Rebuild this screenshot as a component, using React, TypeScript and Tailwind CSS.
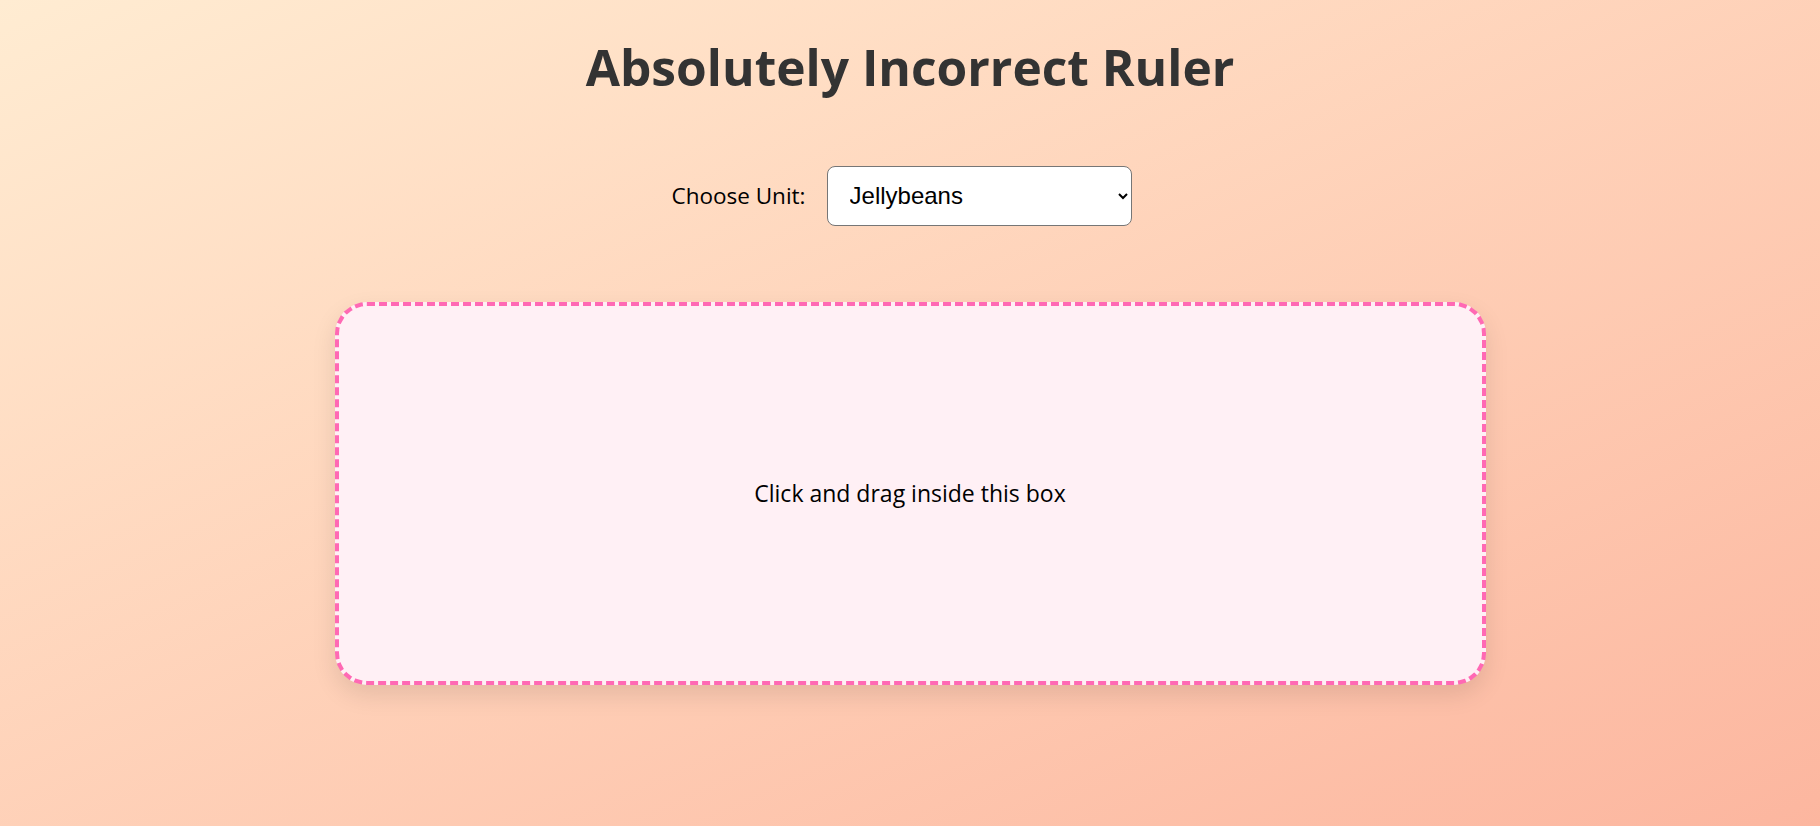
import React, { useState } from 'react';

const units = ['Jellybeans', 'Bananas', 'Rubber Ducks', 'Spaghetti Noodles', 'Hamsters'];

export default function App() {
	const [unit, setUnit] = useState('Jellybeans');

	return (
		<div className="min-h-screen w-full bg-gradient-to-br from-[#ffecd2] to-[#fcb69f] flex flex-col items-center font-['Open_Sans',sans-serif] text-black">
			<h1 className="mt-[38px] text-[49.7px] leading-[1.2] font-bold text-[#333]">
				Absolutely Incorrect Ruler
			</h1>

			<div className="mt-[68px] mr-[17px] flex items-center gap-[21px]">
				<label htmlFor="unit" className="text-[22.5px]">
					Choose Unit:
				</label>
				<select
					id="unit"
					value={unit}
					onChange={(e) => setUnit(e.target.value)}
					className="w-[305px] h-[60px] pl-[18px] pr-1 rounded-lg border border-[#767676] bg-white text-[24px] font-['Liberation_Sans',Arial,sans-serif]"
				>
					{units.map((u) => (
						<option key={u} value={u}>
							{u}
						</option>
					))}
				</select>
			</div>

			<div className="mt-[76px] w-[1151px] h-[383px] rounded-[32px] border-[4px] border-dashed border-[#ff69b4] bg-[#fff0f5] shadow-[0_10px_25px_rgba(0,0,0,0.1)] flex items-center justify-center select-none">
				<p className="text-[23px]">Click and drag inside this box</p>
			</div>
		</div>
	);
}
